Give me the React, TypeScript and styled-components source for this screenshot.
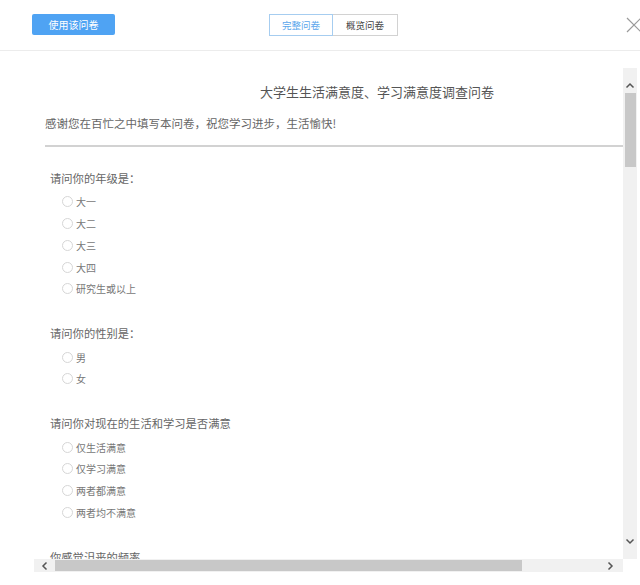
import React from 'react'
import styled, { createGlobalStyle } from 'styled-components'

const GlobalStyle = createGlobalStyle`
  html, body {
    margin: 0;
    padding: 0;
    background: #fff;
    font-family: "Noto Sans CJK SC", "Noto Sans", sans-serif;
    overflow: hidden;
  }
`

const Page = styled.div`
  width: 640px;
  height: 585px;
  overflow: hidden;
`

const Header = styled.div`
  height: 50px;
  border-bottom: 1px solid #ececec;
  display: grid;
  grid-template-columns: 237px 129px 1fr 16px;
  align-items: center;
  padding-left: 32px;
  box-sizing: content-box;
`

const UseButton = styled.button`
  width: 83px;
  height: 21px;
  margin-top: -1px;
  border: none;
  border-radius: 2px;
  background: #4fa3f3;
  color: #fff;
  font-family: inherit;
  font-size: 10px;
  padding: 0;
  justify-self: start;
`

const Tabs = styled.div`
  display: flex;
  height: 22px;
`

const Tab = styled.div<{ $active?: boolean }>`
  width: ${(p) => (p.$active ? 64 : 65)}px;
  box-sizing: border-box;
  display: flex;
  align-items: center;
  justify-content: center;
  font-size: 9.5px;
  color: ${(p) => (p.$active ? '#5aa6ec' : '#444')};
  border: 1px solid ${(p) => (p.$active ? '#a6cdf0' : '#d2d2d2')};
  border-left: ${(p) => (p.$active ? '1px solid #a6cdf0' : 'none')};
`

const CloseIcon = styled.svg`
  width: 16px;
  height: 16px;
  margin-left: 2px;
`

const Frame = styled.div`
  display: grid;
  grid-template-columns: 589px 14px;
  grid-template-rows: 491px 13px;
  padding: 17px 0 0 34px;
`

const Viewport = styled.div`
  overflow: hidden;
`

const Sheet = styled.div`
  width: 686px;
  padding: 14px 11px 0;
  box-sizing: border-box;
`

const Title = styled.div`
  text-align: center;
  font-size: 13px;
  line-height: 20px;
  color: #555;
`

const Intro = styled.div`
  margin-top: 12px;
  font-size: 11.5px;
  line-height: 18px;
  color: #666;
`

const Divider = styled.div`
  margin-top: 13px;
  height: 2px;
  background: #d2d2d2;
`

const Questions = styled.div`
  padding: 22px 0 0 5px;
  display: flex;
  flex-direction: column;
  gap: 24.5px;
`

const Question = styled.div`
  display: flex;
  flex-direction: column;
`

const QText = styled.div`
  font-size: 11.3px;
  line-height: 18px;
  color: #666;
  margin-bottom: 4px;
`

const Option = styled.label`
  display: flex;
  align-items: center;
  height: 21.75px;
  padding-left: 12px;
  font-size: 10px;
  color: #777;
`

const Radio = styled.span`
  width: 11px;
  height: 11px;
  border-radius: 50%;
  border: 1px solid #d6d6d6;
  box-sizing: border-box;
  margin-right: 3px;
`

const VBar = styled.div`
  background: #f1f1f1;
  display: flex;
  flex-direction: column;
  align-items: center;
`

const VButton = styled.div<{ $h: number; $top?: boolean }>`
  height: ${(p) => p.$h}px;
  width: 100%;
  display: flex;
  align-items: ${(p) => (p.$top ? 'flex-start' : 'flex-end')};
  justify-content: center;
  padding: ${(p) => (p.$top ? '7px 0 0' : '0 0 2px')};
  box-sizing: border-box;
`

const VThumb = styled.div`
  width: 11px;
  height: 74px;
  background: #c8c8c8;
`

const VTrack = styled.div`
  flex: 1;
`

const HBar = styled.div`
  background: #f1f1f1;
  display: flex;
  align-items: center;
`

const HButton = styled.div<{ $w: number }>`
  width: ${(p) => p.$w}px;
  height: 100%;
  display: flex;
  align-items: center;
  justify-content: center;
`

const HThumb = styled.div`
  width: 467px;
  height: 11px;
  background: #c8c8c8;
`

const HTrack = styled.div`
  flex: 1;
`

const Chevron = ({ dir }: { dir: 'up' | 'down' | 'left' | 'right' }) => {
  const paths = {
    up: 'M1.5 6.5 L5 3 L8.5 6.5',
    down: 'M1.5 3.5 L5 7 L8.5 3.5',
    left: 'M6.5 1.5 L3 5 L6.5 8.5',
    right: 'M3.5 1.5 L7 5 L3.5 8.5',
  }
  return (
    <svg width="10" height="10" viewBox="0 0 10 10">
      <path d={paths[dir]} fill="none" stroke="#555" strokeWidth="1.5" />
    </svg>
  )
}

const questions = [
  { q: '请问你的年级是：', opts: ['大一', '大二', '大三', '大四', '研究生或以上'] },
  { q: '请问你的性别是：', opts: ['男', '女'] },
  { q: '请问你对现在的生活和学习是否满意', opts: ['仅生活满意', '仅学习满意', '两者都满意', '两者均不满意'] },
  { q: '你感觉沮丧的频率', opts: ['从不', '偶尔', '经常'] },
]

export default function App() {
  return (
    <Page>
      <GlobalStyle />
      <Header>
        <UseButton>使用该问卷</UseButton>
        <Tabs>
          <Tab $active>完整问卷</Tab>
          <Tab>概览问卷</Tab>
        </Tabs>
        <div />
        <CloseIcon viewBox="0 0 16 16">
          <path d="M1 1 L15 15 M15 1 L1 15" stroke="#9a9a9a" strokeWidth="1.2" fill="none" />
        </CloseIcon>
      </Header>
      <Frame>
        <Viewport>
          <Sheet>
            <Title>大学生生活满意度、学习满意度调查问卷</Title>
            <Intro>感谢您在百忙之中填写本问卷，祝您学习进步，生活愉快!</Intro>
            <Divider />
            <Questions>
              {questions.map((item) => (
                <Question key={item.q}>
                  <QText>{item.q}</QText>
                  {item.opts.map((o) => (
                    <Option key={o}>
                      <Radio />
                      {o}
                    </Option>
                  ))}
                </Question>
              ))}
            </Questions>
          </Sheet>
        </Viewport>
        <VBar>
          <VButton $h={25}>
            <Chevron dir="up" />
          </VButton>
          <VThumb />
          <VTrack />
          <VButton $h={30} $top>
            <Chevron dir="down" />
          </VButton>
        </VBar>
        <HBar>
          <HButton $w={21}>
            <Chevron dir="left" />
          </HButton>
          <HThumb />
          <HTrack />
          <HButton $w={26}>
            <Chevron dir="right" />
          </HButton>
        </HBar>
        <div />
      </Frame>
    </Page>
  )
}
